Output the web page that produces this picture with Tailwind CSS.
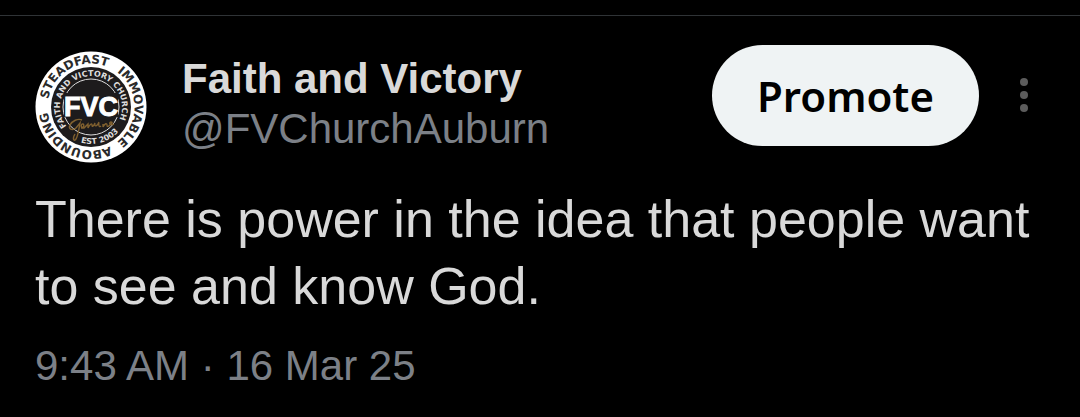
<!DOCTYPE html>
<html lang="en">
<head>
    <meta charset="UTF-8">
    <meta name="viewport" content="width=device-width, initial-scale=1.0">
    <title>Faith and Victory</title>
    <script src="https://cdn.jsdelivr.net/npm/@tailwindcss/browser@4"></script>
</head>
<body class="bg-black font-['Liberation_Sans',sans-serif] text-[#d9d9d9]">
    <article class="mt-[15px] border-t border-[#2f3336] px-[35px] pt-[29px]">
        <!-- Author -->
        <header class="flex items-start">
            <a href="#" aria-label="Faith and Victory profile" class="mt-[6px] shrink-0">
                <svg class="size-[112px]" viewBox="0 0 112 112" font-family="DejaVu Sans, sans-serif" font-weight="700">
                    <defs>
                        <path id="outer" d="M12.5 56a43.5 43.5 0 0 1 87 0a43.5 43.5 0 0 1 -87 0" />
                        <path id="inner" d="M56 87a31 31 0 0 1 0 -62a31 31 0 0 1 0 62" />
                        <path id="lower" d="M19 56a37 37 0 0 0 74 0" />
                    </defs>
                    <circle cx="56" cy="56" r="55.5" fill="#fff" />
                    <circle cx="56" cy="56" r="40" fill="#1d1b1c" />
                    <circle cx="56" cy="56" r="28" fill="none" stroke="#ddd" stroke-width="1" />
                    <g font-size="12" fill="#2a2a2a" text-anchor="middle">
                        <text><textPath href="#outer" startOffset="17%">STEADFAST</textPath></text>
                        <text><textPath href="#outer" startOffset="50%">IMMOVABLE</textPath></text>
                        <text><textPath href="#outer" startOffset="83%">ABOUNDING</textPath></text>
                    </g>
                    <g font-size="8" fill="#ddd" text-anchor="middle">
                        <text><textPath href="#inner" startOffset="48%">FAITH AND VICTORY CHURCH</textPath></text>
                        <text><textPath href="#lower" startOffset="59%">EST 2003</textPath></text>
                    </g>
                    <rect x="29" y="42" width="54" height="24" fill="#1d1b1c" />
                    <text x="56" y="65" font-family="Liberation Sans, sans-serif" font-size="27" fill="#fff" stroke="#fff" stroke-width="1" text-anchor="middle">FVC</text>
                    <path d="M47 69c-4-2-10 1-12 5s2 6 6 3l4-5c-1 6-2 13-4 16s-4 0-1-5M46 77c2 0 4-3 2-4s-3 5 1 4l4-4 0 4c2-4 4-5 4-3s1 2 3-2c-1 4 2 4 4-1M64 72c-1 4 1 4 2 3M68 73v3c2-4 4-4 4-2s1 2 3 0 3-3 1-3-2 4 3 2" fill="none" stroke="#80602f" stroke-width="1.4" />
                </svg>
            </a>
            <div class="ml-[35px] mt-[9px] min-w-0 flex-1 text-[42px] leading-[50px]">
                <h1 class="font-bold">Faith and Victory</h1>
                <a href="#" class="block text-[#7c8087]">@FVChurchAuburn</a>
            </div>
            <button type="button" class="shrink-0 rounded-full bg-[#eff3f4] px-[45px] py-[25px] font-['Noto_Sans',sans-serif] text-[42px] leading-[51px] font-semibold text-black">Promote</button>
            <button type="button" aria-label="More" class="mt-[30px] mr-[11px] ml-[35px] shrink-0">
                <svg class="h-10 w-5" viewBox="0 0 20 40" fill="#5c5c5c">
                    <circle cx="10" cy="7" r="4" />
                    <circle cx="10" cy="20" r="4" />
                    <circle cx="10" cy="33" r="4" />
                </svg>
            </button>
        </header>

        <!-- Post -->
        <p class="mt-[23px] text-[52px] leading-[67px]">There is power in the idea that people want to see and know God.</p>
        <time datetime="2025-03-16T09:43" class="mt-[21px] block text-[42px] leading-[50px] text-[#7c8087]">9:43 AM · 16 Mar 25</time>
    </article>
</body>
</html>
